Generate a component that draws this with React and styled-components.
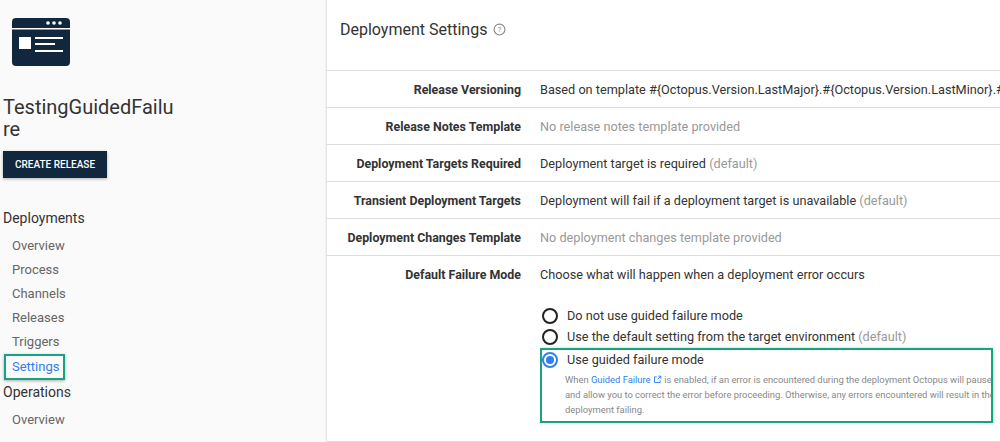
import React from "react";
import styled, { createGlobalStyle } from "styled-components";

const Global = createGlobalStyle`
  html, body { margin: 0; padding: 0; background: #fafafa; font-family: Roboto, "Liberation Sans", sans-serif; overflow: hidden; }
`;

const Page = styled.div`display: flex; width: 1000px; height: 442px; overflow: hidden;`;
const Side = styled.div`width: 326px; flex-shrink: 0; padding: 0 0 0 3px; box-sizing: border-box; background: #fafafa;`;
const Logo = styled.div`margin: 18px 0 0 9px; height: 50px;`;
const Title = styled.h1`margin: 28px 0 0; font-weight: 400; font-size: 20px; line-height: 22px; color: #333; width: 175px; word-break: break-all;`;
const Btn = styled.button`margin-top: 11px; background: #11273d; color: #fff; border: 0; font: 500 10px Roboto, sans-serif; padding: 0 12px; height: 27px; box-shadow: 0 1px 3px rgba(0,0,0,.3);`;
const Group = styled.div`margin-top: 32px; font-size: 14px; color: #333; line-height: 16px;`;
const Group2 = styled(Group)`margin-top: 8px;`;
const NavList = styled.div`display: flex; flex-direction: column; gap: 8px; margin-top: 12px;`;
const NavItem = styled.div`
  font-size: 13px; line-height: 16px; color: ${p => p.$active ? "#2f80ed" : "#666"};
  padding-left: 9px;
  ${p => p.$active && `border: 2px solid #14a57f; width: 52px; margin: -4px 0 -4px 1px; padding: 3px 0 3px 6px; box-sizing: border-box; width: 61px; box-shadow: 0 1px 3px rgba(0,0,0,.3);`}
`;
const Main = styled.div`flex: 1; background: #fff; border-left: 1px solid #e4e4e4; box-shadow: 0 0 2px rgba(0,0,0,.1);`;
const Header = styled.div`height: 71px; border-bottom: 1px solid #ddd; box-sizing: border-box; display: flex; align-items: flex-start; padding: 20px 0 0 13px; font-size: 16px; color: #333; gap: 6px;`;
const Row = styled.div`display: grid; grid-template-columns: 194px 1fr; column-gap: 19px; min-height: 37px; border-bottom: 1px solid #ddd; box-sizing: border-box; align-items: ${p => p.$top ? "start" : "center"}; padding-top: ${p => p.$top ? "11px" : "0"}; white-space: nowrap; font-size: 12.7px;`;
const Label = styled.div`text-align: right; font-weight: 700; color: #333; font-size: 12.4px;`;
const Value = styled.div`color: #333; overflow: hidden;`;
const Muted = styled.span`color: #999;`;
const Radios = styled.div`display: flex; flex-direction: column; margin-top: 26px; gap: 5px;`;
const Radio = styled.div`display: flex; align-items: center; gap: 9px; font-size: 12.7px; color: #333; line-height: 16px; padding-left: ${p => p.$pad || 0}px;`;
const Circle = styled.span`width: 12px; height: 12px; border-radius: 50%; border: 2px solid ${p => p.$on ? "#2f80ed" : "#222"}; display: inline-flex; align-items: center; justify-content: center; flex-shrink: 0;
  &::after { content: ""; width: 8px; height: 8px; border-radius: 50%; background: ${p => p.$on ? "#2f80ed" : "transparent"}; }`;
const Highlight = styled.div`border: 2px solid #14a57f; margin: -2px 0 0 0; padding: 2px 0 4px 0; box-shadow: 0 1px 4px rgba(0,0,0,.3); width: 449px; overflow: hidden;`;
const Help = styled.div`font-size: 9.4px; line-height: 15px; color: #888; padding-left: 23px; margin-top: 4px; white-space: normal; width: 440px;`;
const Link = styled.span`color: #2f80ed;`;

export default function App() {
  return (
    <Page>
      <Global />
      <Side>
        <Logo>
          <svg width="58" height="50" viewBox="0 0 58 50">
            <rect x="0" y="0" width="58" height="48" rx="4" fill="#11273d" />
            <rect x="0" y="10" width="58" height="1.5" fill="#fff" />
            <circle cx="36" cy="5" r="1.8" fill="#fff" /><circle cx="42" cy="5" r="1.8" fill="#fff" /><circle cx="48" cy="5" r="1.8" fill="#fff" />
            <rect x="7" y="19" width="12" height="12" fill="#fff" />
            <rect x="23" y="19" width="28" height="2" fill="#fff" />
            <rect x="23" y="25" width="20" height="2" fill="#fff" />
            <rect x="23" y="32" width="28" height="2" fill="#fff" />
          </svg>
        </Logo>
        <Title>TestingGuidedFailure</Title>
        <Btn>CREATE RELEASE</Btn>
        <Group>Deployments</Group>
        <NavList>
          <NavItem>Overview</NavItem>
          <NavItem>Process</NavItem>
          <NavItem>Channels</NavItem>
          <NavItem>Releases</NavItem>
          <NavItem>Triggers</NavItem>
          <NavItem $active>Settings</NavItem>
        </NavList>
        <Group2>Operations</Group2>
        <NavList><NavItem>Overview</NavItem></NavList>
      </Side>
      <Main>
        <Header>
          Deployment Settings
          <svg width="13" height="13" viewBox="0 0 24 24" style={{ marginTop: 3 }}><circle cx="12" cy="12" r="10" fill="none" stroke="#888" strokeWidth="2" /><text x="12" y="17" fontSize="14" textAnchor="middle" fill="#888" fontFamily="Roboto">?</text></svg>
        </Header>
        <Row><Label>Release Versioning</Label><Value>Based on template #{"{"}Octopus.Version.LastMajor{"}"}.#{"{"}Octopus.Version.LastMinor{"}"}.#{"{"}Octopus.Version.NextPatch{"}"}</Value></Row>
        <Row><Label>Release Notes Template</Label><Value><Muted>No release notes template provided</Muted></Value></Row>
        <Row><Label>Deployment Targets Required</Label><Value>Deployment target is required <Muted>(default)</Muted></Value></Row>
        <Row><Label>Transient Deployment Targets</Label><Value>Deployment will fail if a deployment target is unavailable <Muted>(default)</Muted></Value></Row>
        <Row><Label>Deployment Changes Template</Label><Value><Muted>No deployment changes template provided</Muted></Value></Row>
        <Row $top style={{ minHeight: 186 }}>
          <Label>Default Failure Mode</Label>
          <Value>
            Choose what will happen when a deployment error occurs
            <Radios>
              <Radio $pad={2}><Circle /><span>Do not use guided failure mode</span></Radio>
              <Radio $pad={2}><Circle /><span>Use the default setting from the target environment <Muted>(default)</Muted></span></Radio>
              <Highlight>
                <Radio><Circle $on /><span>Use guided failure mode</span></Radio>
                <Help>When <Link>Guided Failure <svg width="9" height="9" viewBox="0 0 24 24" style={{ verticalAlign: -1 }}><path d="M14 3h7v7M21 3l-9 9M19 14v6H4V5h6" fill="none" stroke="#2f80ed" strokeWidth="2.5" /></svg></Link> is enabled, if an error is encountered during the deployment Octopus will pause and allow you to correct the error before proceeding. Otherwise, any errors encountered will result in the deployment failing.</Help>
              </Highlight>
            </Radios>
          </Value>
        </Row>
      </Main>
    </Page>
  );
}
